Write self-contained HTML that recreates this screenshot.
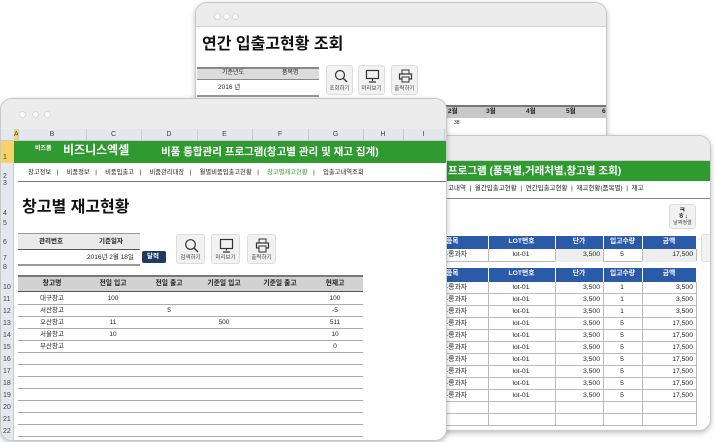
<!DOCTYPE html>
<html><head><meta charset="utf-8"><style>
*{margin:0;padding:0;box-sizing:border-box}
body{width:714px;height:442px;background:#fff;position:relative;overflow:hidden;font-family:"Liberation Sans","Noto Sans CJK KR",sans-serif;color:#222}
.a{position:absolute}
.win{position:absolute;background:#fff;border:1px solid #c8c8c8;border-radius:12px;overflow:hidden;box-shadow:0 2px 6px rgba(0,0,0,.25)}
.tb{position:absolute;left:0;right:0;top:0;background:#ececec;border-bottom:1px solid #d0d0d0}
.dot{position:absolute;width:7px;height:7px;border-radius:50%;background:#fff;border:1px solid #d8d8d8}
.t{position:absolute;white-space:nowrap;font-size:7px;line-height:1.15}
.btn{position:absolute;background:#f2f2f2;border:1px solid #ddd;border-radius:3px}
.btn span{position:absolute;bottom:2px;left:0;right:0;text-align:center;font-size:5.5px;color:#444;line-height:1.1}
.hl{position:absolute;height:1px;background:#bbb}
</style></head><body>

<!-- back window -->
<div class="win" style="left:195px;top:2px;width:412px;height:200px">
 <div class="tb" style="height:24px"></div>
 <div class="dot" style="left:18px;top:10px"></div><div class="dot" style="left:27px;top:10px"></div><div class="dot" style="left:36px;top:10px"></div>
 <div class="t" style="left:6px;top:33px;font-size:16px;font-weight:bold;color:#111">연간 입출고현황 조회</div>
 <div class="a" style="left:1px;top:64px;width:122px;height:13px;background:#dcdcdc;border-top:2px solid #888;border-bottom:1px solid #888"></div>
 <div class="t" style="left:26px;top:67px;font-size:6px">기준년도</div><div class="t" style="left:86px;top:67px;font-size:6px">품목명</div>
 <div class="t" style="left:22px;top:81px;font-size:6.5px">2016 년</div>
 <div class="a" style="left:1px;top:92px;width:122px;height:2px;background:#999"></div>
 <div class="btn" style="left:130px;top:62px;width:27px;height:30px"><svg class="a" style="left:7px;top:3px" width="14" height="14"><circle cx="6" cy="6" r="4.5" fill="none" stroke="#333" stroke-width="1.2"/><path d="M9 9l4 4" stroke="#333" stroke-width="1.3"/></svg><span>조회하기</span></div>
 <div class="btn" style="left:162px;top:62px;width:27px;height:30px"><svg class="a" style="left:6px;top:3px" width="15" height="14"><rect x="1.5" y="1.5" width="12" height="8" fill="none" stroke="#333" stroke-width="1.2"/><path d="M7.5 10v2M4 13h7" stroke="#333" stroke-width="1.2"/></svg><span>미리보기</span></div>
 <div class="btn" style="left:195px;top:62px;width:27px;height:30px"><svg class="a" style="left:6px;top:3px" width="15" height="14"><rect x="4" y="1" width="7" height="4" fill="none" stroke="#333"/><rect x="1.5" y="5" width="12" height="5" fill="none" stroke="#333" stroke-width="1.2"/><rect x="4" y="8" width="7" height="5" fill="#f2f2f2" stroke="#333"/></svg><span>출력하기</span></div>
 <div class="a" style="left:248px;top:102px;width:164px;height:13px;background:#c8c8c8;border-top:2px solid #777"></div>
 <div class="t" style="left:252px;top:105px;font-size:6.5px;font-weight:bold">2월</div><div class="t" style="left:290px;top:105px;font-size:6.5px;font-weight:bold">3월</div><div class="t" style="left:330px;top:105px;font-size:6.5px;font-weight:bold">4월</div><div class="t" style="left:370px;top:105px;font-size:6.5px;font-weight:bold">5월</div><div class="t" style="left:406px;top:105px;font-size:6.5px;font-weight:bold">6</div>
 <div class="t" style="left:258px;top:118px;font-size:5px">38</div>
</div>

<!-- right window -->
<div class="win" style="left:420px;top:135px;width:291px;height:296px">
 <div class="tb" style="height:25px"></div>
 <div class="a" style="left:0;top:25px;width:291px;height:20px;background:#2f9a30"></div>
 <div class="t" style="left:27px;top:29px;font-size:10.5px;font-weight:bold;color:#fff">프로그램 (품목별,거래처별,창고별 조회)</div>
 <div class="t" style="left:27px;top:49px;font-size:6.5px;color:#222">고내역 &nbsp;| &nbsp;월간입출고현황 &nbsp;| &nbsp;연간입출고현황 &nbsp;| &nbsp;재고현황(품목별) &nbsp;| &nbsp;재고</div>
 <div class="a" style="left:0;top:62px;width:291px;height:1px;background:#888"></div>
 <div class="btn" style="left:248px;top:68px;width:27px;height:25px"><div class="t" style="left:9px;top:2px;font-size:7px;font-weight:bold">ㅋ</div><div class="t" style="left:8px;top:8px;font-size:7px;font-weight:bold">ㅎ↓</div><span style="font-size:5px">날짜정렬</span></div>
 <div class="btn" style="left:280px;top:98px;width:20px;height:28px"></div>
 <div class="a" style="left:0;top:100px;width:275px;height:13px;background:#2a5aa8"></div>
 <div class="a" style="left:0;top:113px;width:275px;height:13px;border-bottom:1px solid #bbb"></div>
 <div class="a" style="left:134px;top:113px;width:48px;height:13px;background:#eee"></div>
 <div class="a" style="left:221px;top:113px;width:54px;height:13px;background:#eee"></div>
 <div class="a" style="left:0;top:132px;width:275px;height:14px;background:#2a5aa8"></div>
 <div id="rw"></div>
</div>

<!-- front window -->
<div class="win" style="left:0;top:98px;width:447px;height:343px;border-radius:12px">
 <div class="tb" style="height:30px;border-bottom:none"></div>
 <div class="dot" style="left:18px;top:12px"></div><div class="dot" style="left:31px;top:12px"></div><div class="dot" style="left:43px;top:12px"></div>
 <div class="a" style="left:0;top:30px;width:447px;height:12px;background:#e4e8ee;border-bottom:1px solid #c8ccd2"></div>
 <div class="a" style="left:0;top:42px;width:13px;height:301px;background:#e4e8ee;border-right:1px solid #c8ccd2"></div>
 <div class="a" style="left:13px;top:30px;width:4px;height:12px;background:#f3d36a"></div>
 <div class="a" style="left:0;top:42px;width:13px;height:22px;background:#f3d36a"></div>
 <div class="a" style="left:13px;top:42px;width:434px;height:22px;background:#2f9a30"></div>
 <div class="t" style="left:34px;top:47px;font-size:6px;color:#fff;font-weight:bold">비즈폼</div>
 <div class="t" style="left:62px;top:45px;font-size:12px;color:#fff;font-weight:bold">비즈니스엑셀</div>
 <div class="t" style="left:160px;top:47px;font-size:10.5px;color:#fff;font-weight:bold">비품 통합관리 프로그램(창고별 관리 및 재고 집계)</div>
 <div class="t" style="left:27px;top:70px;font-size:6.3px;word-spacing:1px">창고정보 &nbsp;| &nbsp;&nbsp;비품정보 &nbsp;| &nbsp;&nbsp;비품입출고 &nbsp;| &nbsp;&nbsp;비품관리대장 &nbsp;| &nbsp;&nbsp;월별비품입출고현황 &nbsp;| &nbsp;&nbsp;<span style="color:#3a9c3a">창고별재고현황</span> &nbsp;| &nbsp;&nbsp;입출고내역조회</div>
 <div class="a" style="left:17px;top:82px;width:430px;height:1px;background:#777"></div>
 <div class="t" style="left:21px;top:100px;font-size:16px;font-weight:bold;color:#111">창고별 재고현황</div>
 <div class="a" style="left:17px;top:134px;width:122px;height:17px;background:#eaeaea;border-top:1px solid #999;border-bottom:1px solid #555"></div>
 <div class="t" style="left:38px;top:139px;font-size:6.5px;font-weight:bold">관리번호</div><div class="t" style="left:98px;top:139px;font-size:6.5px;font-weight:bold">기준일자</div>
 <div class="t" style="left:86px;top:155px;font-size:6.5px">2016년 2월 18일</div>
 <div class="a" style="left:141px;top:152px;width:24px;height:12px;background:#1d3a63;border-radius:2px"></div>
 <div class="t" style="left:146px;top:154px;font-size:6.5px;color:#fff;font-weight:bold">달력</div>
 <div class="a" style="left:17px;top:165px;width:122px;height:2px;background:#999"></div>
 <div class="btn" style="left:175px;top:135px;width:29px;height:30px"><svg class="a" style="left:7px;top:3px" width="15" height="15"><circle cx="6.5" cy="6.5" r="4.8" fill="none" stroke="#333" stroke-width="1.2"/><path d="M10 10l4 4" stroke="#333" stroke-width="1.3"/></svg><span>검색하기</span></div>
 <div class="btn" style="left:210px;top:135px;width:29px;height:30px"><svg class="a" style="left:7px;top:3px" width="15" height="15"><rect x="1.5" y="1.5" width="12" height="9" fill="none" stroke="#333" stroke-width="1.2"/><path d="M7.5 10.5v2M4 14h7" stroke="#333" stroke-width="1.2"/></svg><span>미리보기</span></div>
 <div class="btn" style="left:246px;top:135px;width:29px;height:30px"><svg class="a" style="left:7px;top:3px" width="15" height="15"><rect x="4" y="1" width="7" height="4" fill="none" stroke="#333"/><rect x="1.5" y="5" width="12" height="5" fill="none" stroke="#333" stroke-width="1.2"/><rect x="4" y="8" width="7" height="6" fill="#f2f2f2" stroke="#333"/></svg><span>출력하기</span></div>
 <div class="a" style="left:17px;top:176px;width:345px;height:17px;background:#d2d2d2;border-top:2px solid #777;border-bottom:1px solid #555"></div>
 <div id="fw"></div>
</div>

<script>
var fw=document.getElementById('fw'),h='';
var cols=[['',0,13],['A',13,17],['B',17,85],['C',85,140],['D',140,196],['E',196,251],['F',251,307],['G',307,362],['H',362,402],['I',402,443]];
cols.forEach(function(c){if(c[0])h+='<div class="t" style="left:'+c[1]+'px;width:'+(c[2]-c[1])+'px;text-align:center;top:32px;color:#444">'+c[0]+'</div><div class="a" style="left:'+c[2]+'px;top:30px;width:1px;height:12px;background:#c8ccd2"></div>';});
var rows=[[1,42,64],[2,64,83],[3,83,90],[4,90,120],[5,120,130],[6,130,149],[7,149,165],[8,165,174],[9,174,177],[10,177,194]];
for(var i=0;i<12;i++)rows.push([11+i,194+i*12,206+i*12]);
rows.forEach(function(r){if(r[0]==9)return;h+='<div class="t" style="left:2px;top:'+(r[2]-9)+'px;font-size:7px;color:#444">'+r[0]+'</div>';});
var hd=['창고명','전일 입고','전일 출고','기준일 입고','기준일 출고','현재고'];
var cx=[51,112,168,223,279,334];
hd.forEach(function(t,i){h+='<div class="t" style="left:'+(cx[i]-30)+'px;width:60px;text-align:center;top:181px;font-size:6.8px;font-weight:bold">'+t+'</div>';});
var data=[['대구창고','100','','','','100'],['서산창고','','5','','','-5'],['오산창고','11','','500','','511'],['서울창고','10','','','','10'],['부산창고','','','','','0']];
for(var i=0;i<12;i++){var y=194+i*12;var d=data[i];
 if(d)d.forEach(function(t,j){if(t)h+='<div class="t" style="left:'+(cx[j]-30)+'px;width:60px;text-align:center;top:'+(y+2)+'px;font-size:6.5px">'+t+'</div>';});
 h+='<div class="hl" style="left:17px;top:'+(y+11)+'px;width:345px;background:#aaa"></div>';}
fw.innerHTML=h;
var rw=document.getElementById('rw');h='';
var rc=[[0,67,'품목'],[67,134,'LOT번호'],[134,182,'단가'],[182,221,'입고수량'],[221,275,'금액']];
function hdr(y,hh){rc.forEach(function(c,j){var l=j==0?'left:25px;':'left:'+c[0]+'px;width:'+(c[1]-c[0])+'px;text-align:center;';h+='<div class="t" style="'+l+'top:'+(y+2)+'px;color:#fff;font-weight:bold;font-size:6.8px">'+c[2]+'</div><div class="a" style="left:'+c[1]+'px;top:'+y+'px;width:1px;height:'+hh+'px;background:#fff"></div>';});}
function row(y,q,a){var v=[['-롱과자','l'],['lot-01','c'],['3,500','r'],[q,'c'],[a,'r']];
 rc.forEach(function(c,j){var al=v[j][1]=='r'?'right':(v[j][1]=='c'?'center':'left');var L=j==0?25:c[0]+2;h+='<div class="t" style="left:'+L+'px;width:'+(c[1]-L-3)+'px;text-align:'+al+';top:'+(y+2)+'px;font-size:6.8px">'+v[j][0]+'</div><div class="a" style="left:'+c[1]+'px;top:'+y+'px;width:1px;height:12px;background:#bbb"></div>';});}
hdr(100,13);row(113,'5','17,500');hdr(132,14);
var q=['1','1','1','5','5','5','5','5','5','5'],a=['3,500','3,500','3,500','17,500','17,500','17,500','17,500','17,500','17,500','17,500'];
for(var i=0;i<12;i++){var y=146+i*12;if(i<10)row(y,q[i],a[i]);else rc.forEach(function(c){h+='<div class="a" style="left:'+c[1]+'px;top:'+y+'px;width:1px;height:12px;background:#bbb"></div>';});
 h+='<div class="hl" style="left:0;top:'+(y+11)+'px;width:275px"></div>';}
rw.innerHTML=h;
</script>
</body></html>
